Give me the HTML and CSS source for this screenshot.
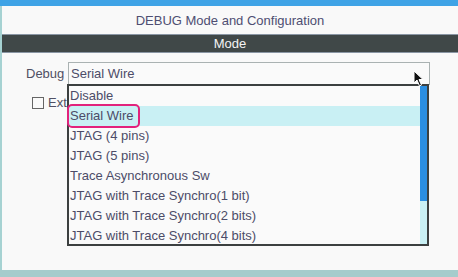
FILE: index.html
```html
<!DOCTYPE html>
<html>
<head>
<meta charset="utf-8">
<link rel="stylesheet" href="styles.css">
</head>
<body>
<div class="topbar"></div>
<div class="panel">
  <div class="title">DEBUG Mode and Configuration</div>
  <div class="modebar">Mode</div>
  <div class="content">
    <div class="row">
      <span class="label">Debug</span>
      <div class="select">
        <span class="value">Serial Wire</span>
        <div class="dropdown">
          <div class="item">Disable</div>
          <div class="item selected"><span class="focus">Serial Wire</span></div>
          <div class="item">JTAG (4 pins)</div>
          <div class="item">JTAG (5 pins)</div>
          <div class="item">Trace Asynchronous Sw</div>
          <div class="item">JTAG with Trace Synchro(1 bit)</div>
          <div class="item">JTAG with Trace Synchro(2 bits)</div>
          <div class="item">JTAG with Trace Synchro(4 bits)</div>
          <div class="scrollbar"><div class="thumb"></div></div>
        </div>
        <svg class="cursor" width="12" height="18" viewBox="0 0 12 18">
          <path d="M1 1 L1 13 L4 10 L6.5 16 L8.5 15 L6 9.5 L10 9.5 Z" fill="#111" stroke="#fff" stroke-width="1"/>
        </svg>
      </div>
    </div>
    <div class="check-row">
      <span class="checkbox"></span>
      <span class="check-label">Ext</span>
    </div>
  </div>
</div>
<div class="bottombar"></div>
</body>
</html>
```
FILE: styles.css
```css
html, body {
  margin: 0;
  padding: 0;
}
body {
  width: 458px;
  height: 277px;
  overflow: hidden;
  background: #f9f9f9;
  font-family: "Liberation Sans", Arial, sans-serif;
  font-size: 13px;
  color: #4c4c68;
}
.topbar {
  height: 6px;
  background: #3fa3e6;
}
.panel {
  height: 264px;
  border-left: 2px solid #a6d2d2;
  display: flex;
  flex-direction: column;
}
.title {
  height: 28px;
  line-height: 29px;
  text-align: center;
  color: #4e4e72;
}
.modebar {
  height: 17px;
  line-height: 18px;
  background: #404848;
  border-top: 1px solid #8a96a4;
  border-bottom: 1px solid #8a96a4;
  color: #f4f4f4;
  text-align: center;
}
.content {
  padding-top: 9px;
  position: relative;
}
.row {
  display: flex;
  align-items: flex-start;
  gap: 4px;
}
.label {
  width: 38px;
  margin-left: 24px;
  line-height: 23px;
  color: #505064;
}
.select {
  position: relative;
  width: 360px;
  height: 22px;
  border: 1px solid #aab2b2;
  border-bottom: none;
  background: #fafafa;
  z-index: 2;
}
.value {
  display: block;
  padding-left: 2px;
  line-height: 22px;
}
.dropdown {
  position: absolute;
  top: 21px;
  left: -2px;
  width: 358px;
  height: 158px;
  border: 2px solid #3c4040;
  background: #fafafa;
}
.item {
  height: 20px;
  line-height: 20px;
  padding-left: 1px;
  white-space: nowrap;
}
.item.selected {
  background: #c9f0f4;
}
.focus {
  display: inline-block;
  height: 20px;
  line-height: 20px;
  margin-left: -1px;
  padding: 0 4px 0 1px;
  outline: 2px solid #e2227c;
  outline-offset: 0;
  border-radius: 3px;
  vertical-align: top;
}
.scrollbar {
  position: absolute;
  top: 0;
  right: 0;
  bottom: 0;
  width: 7px;
  background: #c9f0f4;
}
.thumb {
  height: 115px;
  background: #2a8ee2;
}
.cursor {
  position: absolute;
  left: 344px;
  top: 7px;
  z-index: 3;
}
.check-row {
  display: flex;
  align-items: center;
  gap: 4px;
  margin-top: 10px;
  margin-left: 30px;
}
.checkbox {
  width: 10px;
  height: 10px;
  border: 1px solid #666;
  background: #fafafa;
}
.check-label {
  color: #505064;
}
.bottombar {
  height: 7px;
  background: #a6cccc;
}
```
